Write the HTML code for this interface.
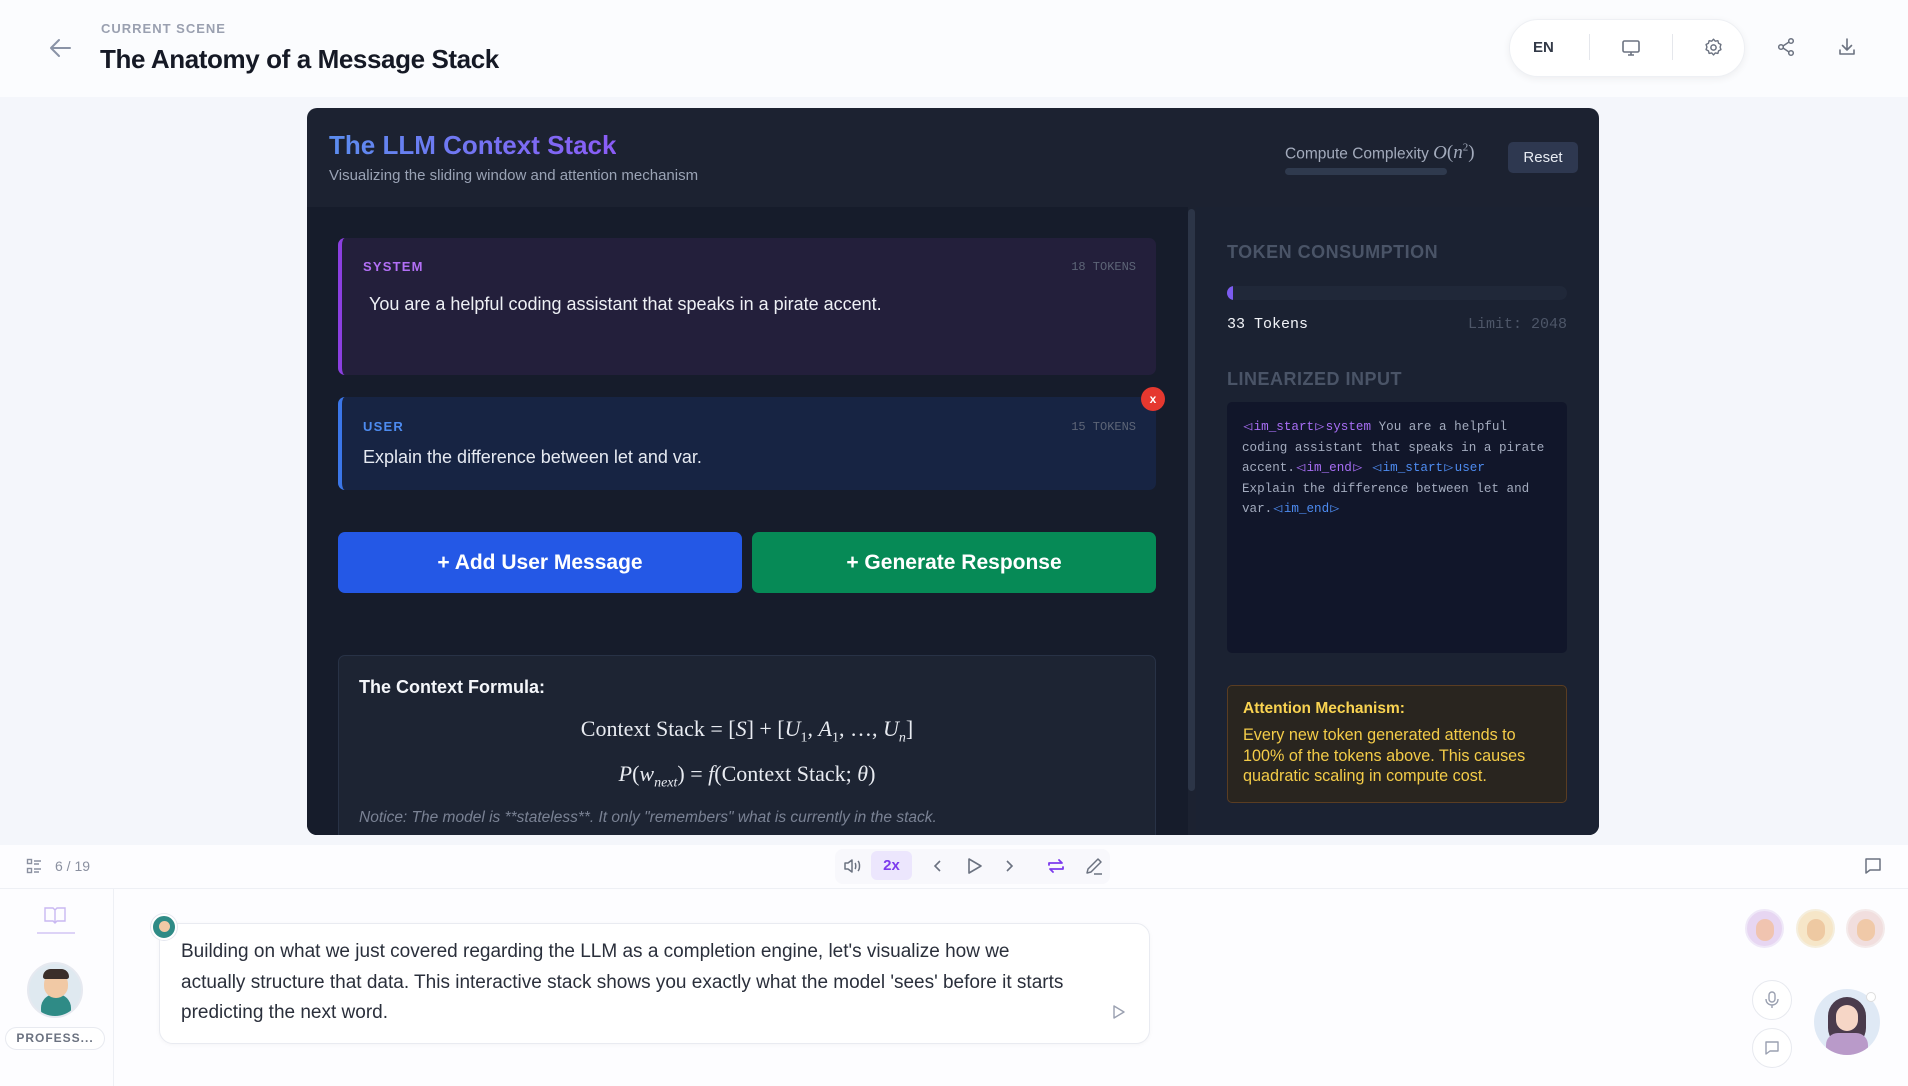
<!DOCTYPE html>
<html><head><meta charset="utf-8">
<style>
*{box-sizing:border-box;margin:0;padding:0}
body{width:1908px;height:1086px;overflow:hidden;background:#f4f6fb;font-family:"Liberation Sans",sans-serif;position:relative}
.abs{position:absolute}
.mono{font-family:"Liberation Mono","DejaVu Sans Mono",monospace}
svg{display:block}
.tk{display:inline-block;transform:scaleX(1.2);margin:0 2px}
</style></head><body>
<div class="abs" style="left:0;top:0;width:1908px;height:97px;background:#fbfcfe"></div>
<svg class="abs" style="left:48px;top:37px" width="26" height="22" viewBox="0 0 26 22"><path d="M22 11H4M11 3L3 11l8 8" fill="none" stroke="#8a93a6" stroke-width="2" stroke-linecap="round" stroke-linejoin="round"/></svg>
<div class="abs" style="left:101px;top:21px;font-size:13px;font-weight:bold;letter-spacing:1px;color:#9aa0b0">CURRENT SCENE</div>
<div class="abs" style="left:100px;top:44px;font-size:26px;font-weight:bold;color:#151925;letter-spacing:-0.4px">The Anatomy of a Message Stack</div>
<div class="abs" style="left:1509px;top:19px;width:236px;height:58px;border-radius:29px;background:#fff;box-shadow:0 2px 8px rgba(0,0,0,0.06);border:1px solid #eef0f4"></div>
<div class="abs" style="left:1533px;top:39px;font-size:15px;font-weight:bold;color:#333a48">EN</div>
<div class="abs" style="left:1589px;top:34px;width:1px;height:26px;background:#e5e7ec"></div>
<svg class="abs" style="left:1621px;top:38px" width="20" height="20" viewBox="0 0 20 20"><rect x="2" y="3" width="16" height="11" rx="1.5" fill="none" stroke="#6b7280" stroke-width="1.6"/><path d="M7 17h6M10 14v3" stroke="#6b7280" stroke-width="1.6"/></svg>
<div class="abs" style="left:1672px;top:34px;width:1px;height:26px;background:#e5e7ec"></div>
<svg class="abs" style="left:1703px;top:37px" width="21" height="21" viewBox="0 0 24 24"><circle cx="12" cy="12" r="3" fill="none" stroke="#6b7280" stroke-width="1.7"/><path d="M12 2.5l2 2.3 3-.6.8 3 2.7 1.4-1 2.9 1 2.9-2.7 1.4-.8 3-3-.6-2 2.3-2-2.3-3 .6-.8-3-2.7-1.4 1-2.9-1-2.9 2.7-1.4.8-3 3 .6z" fill="none" stroke="#6b7280" stroke-width="1.6" stroke-linejoin="round"/></svg>
<svg class="abs" style="left:1776px;top:37px" width="20" height="20" viewBox="0 0 20 20"><circle cx="15" cy="4" r="2.3" fill="none" stroke="#6b7280" stroke-width="1.5"/><circle cx="5" cy="10" r="2.3" fill="none" stroke="#6b7280" stroke-width="1.5"/><circle cx="15" cy="16" r="2.3" fill="none" stroke="#6b7280" stroke-width="1.5"/><path d="M7 9l6-4M7 11l6 4" stroke="#6b7280" stroke-width="1.5"/></svg>
<svg class="abs" style="left:1837px;top:37px" width="20" height="20" viewBox="0 0 20 20"><path d="M10 2v11M5.5 8.5L10 13l4.5-4.5M3 13v4h14v-4" fill="none" stroke="#6b7280" stroke-width="1.6" stroke-linecap="round" stroke-linejoin="round"/></svg>

<div class="abs" style="left:307px;top:108px;width:1292px;height:727px;border-radius:10px;background:#1c2231;overflow:hidden">
  <div class="abs" style="left:22px;top:22px;font-size:26px;font-weight:bold;background:linear-gradient(90deg,#5b8def,#8b5cf6);-webkit-background-clip:text;color:transparent">The LLM Context Stack</div>
  <div class="abs" style="left:22px;top:59px;font-size:15px;color:#9aa3b5">Visualizing the sliding window and attention mechanism</div>
  <div class="abs" style="left:978px;top:34px;font-size:15.5px;color:#a3abbc">Compute Complexity <span style="font-family:'Liberation Serif',serif;font-style:italic;font-size:19px">O</span><span style="font-family:'Liberation Serif',serif;font-size:19px">(<i>n</i><sup style="font-size:11px">2</sup>)</span></div>
  <div class="abs" style="left:978px;top:60px;width:162px;height:7px;border-radius:4px;background:#2f3a4e"></div>
  <div class="abs" style="left:1201px;top:34px;width:70px;height:31px;border-radius:5px;background:#2e3850;color:#e8ecf3;font-size:15px;text-align:center;line-height:31px">Reset</div>
  <div class="abs" style="left:0;top:99px;width:881px;height:628px;background:#161c2b"></div>
  <div class="abs" style="left:881px;top:101px;width:7px;height:582px;border-radius:4px;background:#2c3547"></div>
  <div class="abs" style="left:889px;top:99px;width:403px;height:628px;background:#1b2232"></div>
  <div class="abs" style="left:31px;top:130px;width:818px;height:137px;border-radius:7px;background:#231f3b;border-left:4px solid #8b3fe0"></div>
  <div class="abs" style="left:56px;top:151px;font-size:13px;font-weight:bold;letter-spacing:1.2px;color:#b26ff5">SYSTEM</div>
  <div class="abs mono" style="right:463px;top:152px;font-size:12px;color:#5d6577">18 TOKENS</div>
  <div class="abs" style="left:62px;top:186px;font-size:18px;color:#eef0f5">You are a helpful coding assistant that speaks in a pirate accent.</div>
  <div class="abs" style="left:31px;top:289px;width:818px;height:93px;border-radius:7px;background:#172443;border-left:4px solid #3b76e8"></div>
  <div class="abs" style="left:56px;top:311px;font-size:13px;font-weight:bold;letter-spacing:1.2px;color:#4d8bf0">USER</div>
  <div class="abs mono" style="right:463px;top:312px;font-size:12px;color:#5d6577">15 TOKENS</div>
  <div class="abs" style="left:56px;top:339px;font-size:18px;color:#e6eaf2">Explain the difference between let and var.</div>
  <div class="abs" style="left:834px;top:279px;width:24px;height:24px;border-radius:12px;background:#e5382f;color:#fff;font-size:12px;font-weight:bold;text-align:center;line-height:24px">x</div>
  <div class="abs" style="left:31px;top:424px;width:404px;height:61px;border-radius:7px;background:#2458e6;color:#fff;font-size:21px;font-weight:bold;text-align:center;line-height:61px">+ Add User Message</div>
  <div class="abs" style="left:445px;top:424px;width:404px;height:61px;border-radius:7px;background:#068a56;color:#fff;font-size:21px;font-weight:bold;text-align:center;line-height:61px">+ Generate Response</div>
  <div class="abs" style="left:31px;top:547px;width:818px;height:200px;border-radius:7px;background:#1d2433;border:1px solid #283246"></div>
  <div class="abs" style="left:52px;top:569px;font-size:18px;font-weight:bold;color:#f4f6fa">The Context Formula:</div>
  <div class="abs" style="left:31px;top:608px;width:818px;text-align:center;font-family:'Liberation Serif',serif;font-size:22px;color:#e8ebf1">Context Stack = [<i>S</i>] + [<i>U</i><sub style="font-size:14px">1</sub>, <i>A</i><sub style="font-size:14px">1</sub>, …, <i>U<sub style="font-size:14px">n</sub></i>]</div>
  <div class="abs" style="left:31px;top:653px;width:818px;text-align:center;font-family:'Liberation Serif',serif;font-size:22px;color:#e8ebf1"><i>P</i>(<i>w<sub style="font-size:14px">next</sub></i>) = <i>f</i>(Context Stack; <i>θ</i>)</div>
  <div class="abs" style="left:52px;top:701px;font-size:15.5px;font-style:italic;color:#7a8294">Notice: The model is **stateless**. It only "remembers" what is currently in the stack.</div>
  <div class="abs" style="left:920px;top:134px;font-size:18px;font-weight:bold;letter-spacing:0.5px;color:#4a5467">TOKEN CONSUMPTION</div>
  <div class="abs" style="left:920px;top:178px;width:340px;height:14px;border-radius:7px;background:#202839;overflow:hidden"><div style="width:6px;height:14px;background:#7c5cf0;border-radius:7px 0 0 7px"></div></div>
  <div class="abs mono" style="left:920px;top:208px;font-size:15px;color:#f2f4f8">33 Tokens</div>
  <div class="abs mono" style="right:32px;top:208px;font-size:15px;color:#4d5668">Limit: 2048</div>
  <div class="abs" style="left:920px;top:261px;font-size:18px;font-weight:bold;letter-spacing:0.5px;color:#4a5467">LINEARIZED INPUT</div>
  <div class="abs mono" style="left:920px;top:294px;width:340px;height:251px;border-radius:5px;background:#11162a;padding:15px 10px 0 15px;font-size:12.6px;line-height:20.5px;color:#a3abbe;white-space:nowrap"><span style="color:#a86ef5"><span class="tk">◁</span>im_start<span class="tk">▷</span>system</span> You are a helpful<br>coding assistant that speaks in a pirate<br>accent.<span style="color:#a86ef5"><span class="tk">◁</span>im_end<span class="tk">▷</span></span> <span style="color:#4d8bf0"><span class="tk">◁</span>im_start<span class="tk">▷</span>user</span><br>Explain the difference between let and<br>var.<span style="color:#4d8bf0"><span class="tk">◁</span>im_end<span class="tk">▷</span></span></div>
  <div class="abs" style="left:920px;top:577px;width:340px;height:118px;border-radius:5px;background:#29251f;border:1px solid #5a3d22;padding:14px 15px">
    <div style="font-size:15.5px;font-weight:bold;color:#f9d351">Attention Mechanism:</div>
    <div style="font-size:16.2px;line-height:20.5px;color:#f4cc48;margin-top:7px;width:300px">Every new token generated attends to 100% of the tokens above. This causes quadratic scaling in compute cost.</div>
  </div>
</div>

<div class="abs" style="left:0;top:845px;width:1908px;height:241px;background:#fdfdff"></div>
<div class="abs" style="left:0;top:888px;width:1908px;height:1px;background:#eef0f5"></div>
<svg class="abs" style="left:26px;top:858px" width="16" height="16" viewBox="0 0 16 16"><g fill="none" stroke="#8a90a0" stroke-width="1.4"><rect x="1.5" y="1.5" width="4" height="4"/><rect x="1.5" y="10.5" width="4" height="4"/><path d="M8 3h7M8 6h5M8 11h7M8 14h5"/></g></svg>
<div class="abs" style="left:55px;top:858px;font-size:14px;color:#8a90a0">6 / 19</div>
<div class="abs" style="left:835px;top:849px;width:275px;height:35px;border-radius:8px;background:#f8f8fc"></div>
<svg class="abs" style="left:843px;top:857px" width="20" height="18" viewBox="0 0 20 18"><path d="M2 6h3l4-3v12l-4-3H2z M12 6c1 1 1 5 0 6M15 4c2 2 2 8 0 10" fill="none" stroke="#6b7280" stroke-width="1.5" stroke-linejoin="round"/></svg>
<div class="abs" style="left:871px;top:851px;width:41px;height:29px;border-radius:6px;background:#ece6fd;color:#7c3aed;font-size:15px;font-weight:bold;text-align:center;line-height:29px">2x</div>
<svg class="abs" style="left:932px;top:858px" width="12" height="16" viewBox="0 0 12 16"><path d="M8 3L3 8l5 5" fill="none" stroke="#6b7280" stroke-width="1.6"/></svg>
<svg class="abs" style="left:966px;top:856px" width="18" height="20" viewBox="0 0 18 20"><path d="M3 3l12 7-12 7z" fill="none" stroke="#6b7280" stroke-width="1.6" stroke-linejoin="round"/></svg>
<svg class="abs" style="left:1003px;top:858px" width="12" height="16" viewBox="0 0 12 16"><path d="M4 3l5 5-5 5" fill="none" stroke="#6b7280" stroke-width="1.6"/></svg>
<svg class="abs" style="left:1046px;top:856px" width="20" height="20" viewBox="0 0 20 20"><path d="M3 9V7h13l-3-3M17 11v2H4l3 3" fill="none" stroke="#7c3aed" stroke-width="1.8" stroke-linecap="round" stroke-linejoin="round"/></svg>
<svg class="abs" style="left:1084px;top:856px" width="20" height="20" viewBox="0 0 20 20"><path d="M3 17l1-4L14 3l3 3L7 16zM10 18h8" fill="none" stroke="#6b7280" stroke-width="1.5" stroke-linejoin="round"/></svg>
<svg class="abs" style="left:1864px;top:857px" width="18" height="18" viewBox="0 0 18 18"><path d="M2 2h14v11H6l-4 3z" fill="none" stroke="#6b7280" stroke-width="1.5" stroke-linejoin="round"/></svg>
<div class="abs" style="left:113px;top:889px;width:1px;height:197px;background:#eef0f5"></div>
<svg class="abs" style="left:43px;top:905px" width="24" height="20" viewBox="0 0 24 20"><path d="M2 3h8l2 2 2-2h8v13h-8l-2 2-2-2H2zM12 5v13" fill="none" stroke="#c9b8f2" stroke-width="1.4"/></svg>
<div class="abs" style="left:37px;top:932px;width:38px;height:2px;background:#ddd3f7"></div>
<div class="abs" style="left:27px;top:962px;width:56px;height:56px;border-radius:28px;background:#dfe9f0;border:2px solid #e6e9f0;overflow:hidden">
 <div style="position:absolute;left:12px;top:30px;width:30px;height:30px;border-radius:14px;background:#2f8b86"></div>
 <div style="position:absolute;left:15px;top:8px;width:24px;height:26px;border-radius:12px;background:#f1c9a5"></div>
 <div style="position:absolute;left:14px;top:5px;width:26px;height:10px;border-radius:10px 10px 3px 3px;background:#3a2e2a"></div>
</div>
<div class="abs" style="left:5px;top:1027px;width:100px;height:23px;border-radius:12px;background:#fff;border:1px solid #e8eaf0;font-size:12px;font-weight:bold;letter-spacing:1px;color:#6b7280;text-align:center;line-height:21px">PROFESS...</div>
<div class="abs" style="left:159px;top:923px;width:991px;height:121px;border-radius:14px;background:#fff;border:1px solid #e9ebf1;box-shadow:0 1px 4px rgba(0,0,0,0.04)"></div>
<div class="abs" style="left:151px;top:914px;width:26px;height:26px;border-radius:13px;background:#2f8b86;border:2px solid #fff;box-shadow:0 0 0 1px #e5e7ef"><div style="margin:5px auto 0;width:11px;height:11px;border-radius:6px;background:#f1c9a5"></div></div>
<div class="abs" style="left:181px;top:937px;width:885px;font-size:19px;line-height:30.5px;color:#2a2f3b">Building on what we just covered regarding the LLM as a completion engine, let's visualize how we actually structure that data. This interactive stack shows you exactly what the model 'sees' before it starts predicting the next word.</div>
<svg class="abs" style="left:1112px;top:1004px" width="14" height="16" viewBox="0 0 14 16"><path d="M2 2l10 6-10 6z" fill="none" stroke="#9aa0b0" stroke-width="1.4" stroke-linejoin="round"/></svg>
<div class="abs" style="left:1745px;top:909px;width:39px;height:39px;border-radius:20px;background:#e7d6f2;border:2px solid #efe8f8"><div style="margin:8px auto 0;width:18px;height:22px;border-radius:9px;background:#f0c4b0"></div></div>
<div class="abs" style="left:1796px;top:909px;width:39px;height:39px;border-radius:20px;background:#f6e6c8;border:2px solid #f5eedd"><div style="margin:8px auto 0;width:18px;height:22px;border-radius:9px;background:#eec9a2"></div></div>
<div class="abs" style="left:1846px;top:909px;width:39px;height:39px;border-radius:20px;background:#f1dede;border:2px solid #f4eaea"><div style="margin:8px auto 0;width:18px;height:22px;border-radius:9px;background:#f0c9a8"></div></div>
<div class="abs" style="left:1752px;top:980px;width:40px;height:40px;border-radius:20px;background:#fff;border:1px solid #e7e9ef"></div>
<svg class="abs" style="left:1764px;top:990px" width="16" height="20" viewBox="0 0 16 20"><rect x="5" y="2" width="6" height="10" rx="3" fill="none" stroke="#9aa0b0" stroke-width="1.4"/><path d="M2 9c0 4 3 6 6 6s6-2 6-6M8 15v3" fill="none" stroke="#9aa0b0" stroke-width="1.4"/></svg>
<div class="abs" style="left:1752px;top:1028px;width:40px;height:40px;border-radius:20px;background:#fff;border:1px solid #e7e9ef"></div>
<svg class="abs" style="left:1764px;top:1040px" width="16" height="16" viewBox="0 0 16 16"><path d="M2 2h12v9H6l-4 3z" fill="none" stroke="#9aa0b0" stroke-width="1.4" stroke-linejoin="round"/></svg>
<div class="abs" style="left:1814px;top:989px;width:66px;height:66px;border-radius:33px;background:#dfe9f5;overflow:hidden">
 <div style="position:absolute;left:14px;top:8px;width:38px;height:50px;border-radius:19px;background:#4a3b4c"></div>
 <div style="position:absolute;left:22px;top:16px;width:22px;height:26px;border-radius:11px;background:#f6d6c6"></div>
 <div style="position:absolute;left:12px;top:44px;width:42px;height:30px;border-radius:12px;background:#b99ac9"></div>
</div>
<div class="abs" style="left:1866px;top:992px;width:10px;height:10px;border-radius:5px;background:#fff;border:1px solid #ddd"></div>
</body></html>
